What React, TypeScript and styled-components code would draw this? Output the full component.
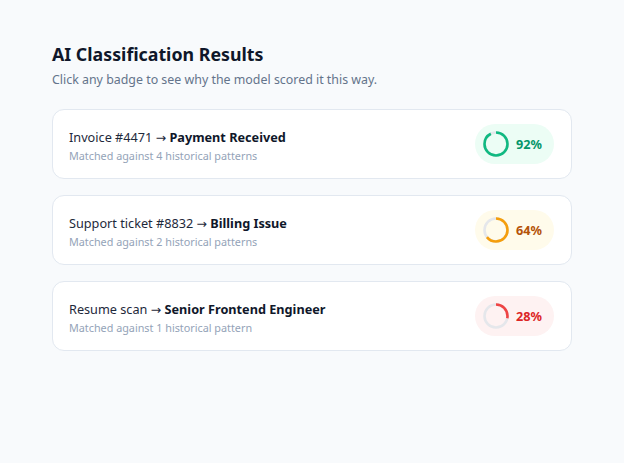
import styled, { createGlobalStyle } from "styled-components";

const GlobalStyle = createGlobalStyle`
html,
body {
  margin: 0;
  padding: 0;
  background: #f8fafc;
  font-family: "Noto Sans", "Open Sans", sans-serif;
}
`;

const Page = styled.main`
  width: 520px;
  margin: 0 auto;
  padding: 41px 0;
`;

const Title = styled.h1`
  margin: 0;
  font-size: 17.8px;
  line-height: 26px;
  font-weight: 700;
  color: #0f172a;
`;

const Subtitle = styled.p`
  margin: 4px 0 20px;
  font-size: 12.4px;
  line-height: 18px;
  color: #64748b;
`;

const List = styled.div`
  display: flex;
  flex-direction: column;
  gap: 16px;
`;

const Card = styled.div`
  display: flex;
  align-items: center;
  justify-content: space-between;
  height: 68px;
  padding: 0 17px 0 16px;
  background: #ffffff;
  border: 1px solid #e2e8f0;
  border-radius: 12px;
`;

const Info = styled.div`
  display: flex;
  flex-direction: column;
  gap: 1px;
  margin-top: 3px;
`;

const Label = styled.div`
  font-size: 12.7px;
  line-height: 19px;
  color: #1e293b;

  strong {
    font-weight: 700;
    color: #0f172a;
  }
`;

const Arrow = styled.span`
  font-family: "DejaVu Sans", sans-serif;
  font-size: 12.5px;
`;

const Meta = styled.div`
  font-size: 10.8px;
  line-height: 16px;
  color: #94a3b8;
`;

interface Tone {
  ring: string;
  text: string;
  bg: string;
}

const Badge = styled.button<{ $tone: Tone }>`
  display: flex;
  align-items: center;
  gap: 7px;
  height: 40px;
  padding: 0 12px 0 8px;
  border: none;
  border-radius: 20px;
  background: ${({ $tone }) => $tone.bg};
  color: ${({ $tone }) => $tone.text};
  font-family: inherit;
  font-size: 12.7px;
  font-weight: 700;
  cursor: pointer;
`;

const tones: Record<string, Tone> = {
  high: { ring: "#10b981", text: "#059669", bg: "#ecfdf5" },
  mid: { ring: "#f59e0b", text: "#b45309", bg: "#fffbeb" },
  low: { ring: "#ef4444", text: "#dc2626", bg: "#fef2f2" },
};

const Ring = ({ value, color }: { value: number; color: string }) => {
  const r = 11.5;
  const c = 2 * Math.PI * r;
  return (
    <svg width="26" height="26" viewBox="0 0 26 26">
      <circle cx="13" cy="13" r={r} fill="none" stroke="#e5e7eb" strokeWidth="2.6" />
      <circle
        cx="13"
        cy="13"
        r={r}
        fill="none"
        stroke={color}
        strokeWidth="2.6"
        strokeDasharray={`${(c * value) / 100} ${c}`}
        transform="rotate(-90 13 13)"
      />
    </svg>
  );
};

const results = [
  { source: "Invoice #4471", label: "Payment Received", patterns: 4, score: 92, tone: "high" },
  { source: "Support ticket #8832", label: "Billing Issue", patterns: 2, score: 64, tone: "mid" },
  { source: "Resume scan", label: "Senior Frontend Engineer", patterns: 1, score: 28, tone: "low" },
];

export default function App() {
  return (
    <Page>
      <GlobalStyle />
      <Title>AI Classification Results</Title>
      <Subtitle>Click any badge to see why the model scored it this way.</Subtitle>
      <List>
        {results.map((r) => (
          <Card key={r.source}>
            <Info>
              <Label>
                {r.source} <Arrow>→</Arrow> <strong>{r.label}</strong>
              </Label>
              <Meta>
                Matched against {r.patterns} historical pattern{r.patterns === 1 ? "" : "s"}
              </Meta>
            </Info>
            <Badge $tone={tones[r.tone]}>
              <Ring value={r.score} color={tones[r.tone].ring} />
              {r.score}%
            </Badge>
          </Card>
        ))}
      </List>
    </Page>
  );
}
